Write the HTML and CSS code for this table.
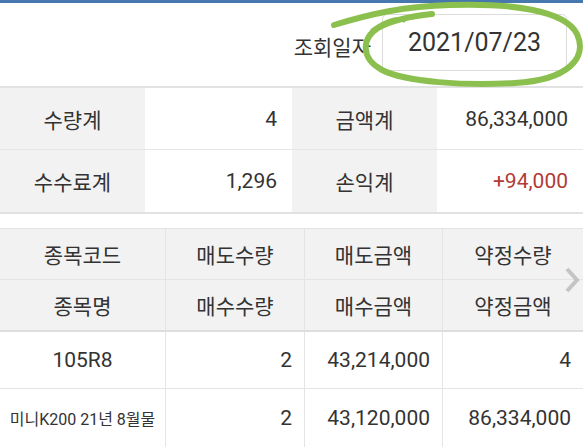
FILE: index.html
```html
<!DOCTYPE html>
<html lang="ko">
<head>
<meta charset="utf-8">
<link rel="stylesheet" href="styles.css">
</head>
<body>
<div class="topbar"></div>
<div class="search">
  <span class="search-label">조회일자</span>
  <div class="date-box">2021/07/23</div>
  <svg class="mark" width="583" height="95" viewBox="0 0 583 95">
    <path d="M334 25 C 370 14, 405 6, 450 5 C 510 3, 565 10, 577 34 C 588 58, 568 80, 515 83 C 465 86, 405 82, 382 70 C 360 58, 362 38, 378 28 C 392 20, 412 16, 432 14" fill="none" stroke="#8cc04e" stroke-width="6" stroke-linecap="round"/>
    <path d="M372 30 C 385 20, 398 16, 404 21" fill="none" stroke="#8cc04e" stroke-width="3" stroke-linecap="round"/>
  </svg>
</div>
<div class="summary">
  <div class="s-label">수량계</div>
  <div class="s-val">4</div>
  <div class="s-label">금액계</div>
  <div class="s-val">86,334,000</div>
  <div class="s-label">수수료계</div>
  <div class="s-val">1,296</div>
  <div class="s-label">손익계</div>
  <div class="s-val red">+94,000</div>
</div>
<div class="grid">
  <div class="h">종목코드</div>
  <div class="h">매도수량</div>
  <div class="h">매도금액</div>
  <div class="h">약정수량</div>
  <div class="h">종목명</div>
  <div class="h">매수수량</div>
  <div class="h">매수금액</div>
  <div class="h">약정금액</div>
  <div class="d c">105R8</div>
  <div class="d">2</div>
  <div class="d">43,214,000</div>
  <div class="d">4</div>
  <div class="d c small">미니K200 21년 8월물</div>
  <div class="d">2</div>
  <div class="d">43,120,000</div>
  <div class="d">86,334,000</div>
  <svg class="chev" width="16" height="28" viewBox="0 0 16 28"><path d="M3 3 L13 14 L3 25" fill="none" stroke="#c4c4c4" stroke-width="4"/></svg>
</div>
</body>
</html>
```
FILE: styles.css
```css
html, body {
  margin: 0;
  padding: 0;
  background: #fff;
}
body {
  width: 583px;
  height: 447px;
  overflow: hidden;
  font-family: "Roboto", "Noto Sans CJK KR", sans-serif;
  color: #333;
  position: relative;
}
.topbar {
  height: 3px;
  background: #4677ad;
}
.search {
  position: relative;
  height: 83px;
  display: flex;
  align-items: center;
  justify-content: flex-end;
  padding-right: 16px;
  box-sizing: border-box;
}
.search-label {
  font-size: 21px;
  margin-right: 11px;
  margin-top: 2px;
}
.date-box {
  width: 185px;
  height: 57px;
  box-sizing: border-box;
  border: 1px solid #dcdcdc;
  border-radius: 5px;
  display: flex;
  align-items: center;
  justify-content: center;
  font-size: 25px;
  color: #333;
  margin-top: -4px;
}
.mark {
  position: absolute;
  left: 0;
  top: -3px;
}
.summary {
  display: grid;
  grid-template-columns: 145px 147px 145px 146px;
  grid-template-rows: 62px 62px;
  border-top: 2px solid #e2e2e2;
  border-bottom: 2px solid #e2e2e2;
}
.summary > div {
  display: flex;
  align-items: center;
  font-size: 21px;
  border-bottom: 1px solid #e6e6e6;
}
.summary > div:nth-child(n+5) {
  border-bottom: none;
}
.s-label {
  background: #f2f2f2;
  justify-content: center;
}
.s-val {
  background: #fff;
  justify-content: flex-end;
  padding-right: 15px;
}
.red {
  color: #b33a35;
}
.grid {
  position: relative;
  margin-top: 14px;
  display: grid;
  grid-template-columns: 166px 139px 138px 140px;
  grid-template-rows: 51px 52px 57px 59px;
  border-top: 1px solid #e2e2e2;
}
.grid > div {
  display: flex;
  align-items: center;
  font-size: 21px;
  border-right: 1px solid #e4e4e4;
  border-bottom: 1px solid #e4e4e4;
  box-sizing: border-box;
}
.grid > div:nth-child(4n) {
  border-right: none;
}
.h {
  background: #f2f2f2;
  justify-content: center;
}
.grid > .h:nth-child(n+5) {
  border-bottom: 2px solid #dedede;
}
.d {
  justify-content: flex-end;
  padding-right: 12px;
}
.d.c {
  justify-content: center;
  padding-right: 0;
}
.small {
  font-size: 16px !important;
}
.chev {
  position: absolute;
  right: 3px;
  top: 37px;
}
```
